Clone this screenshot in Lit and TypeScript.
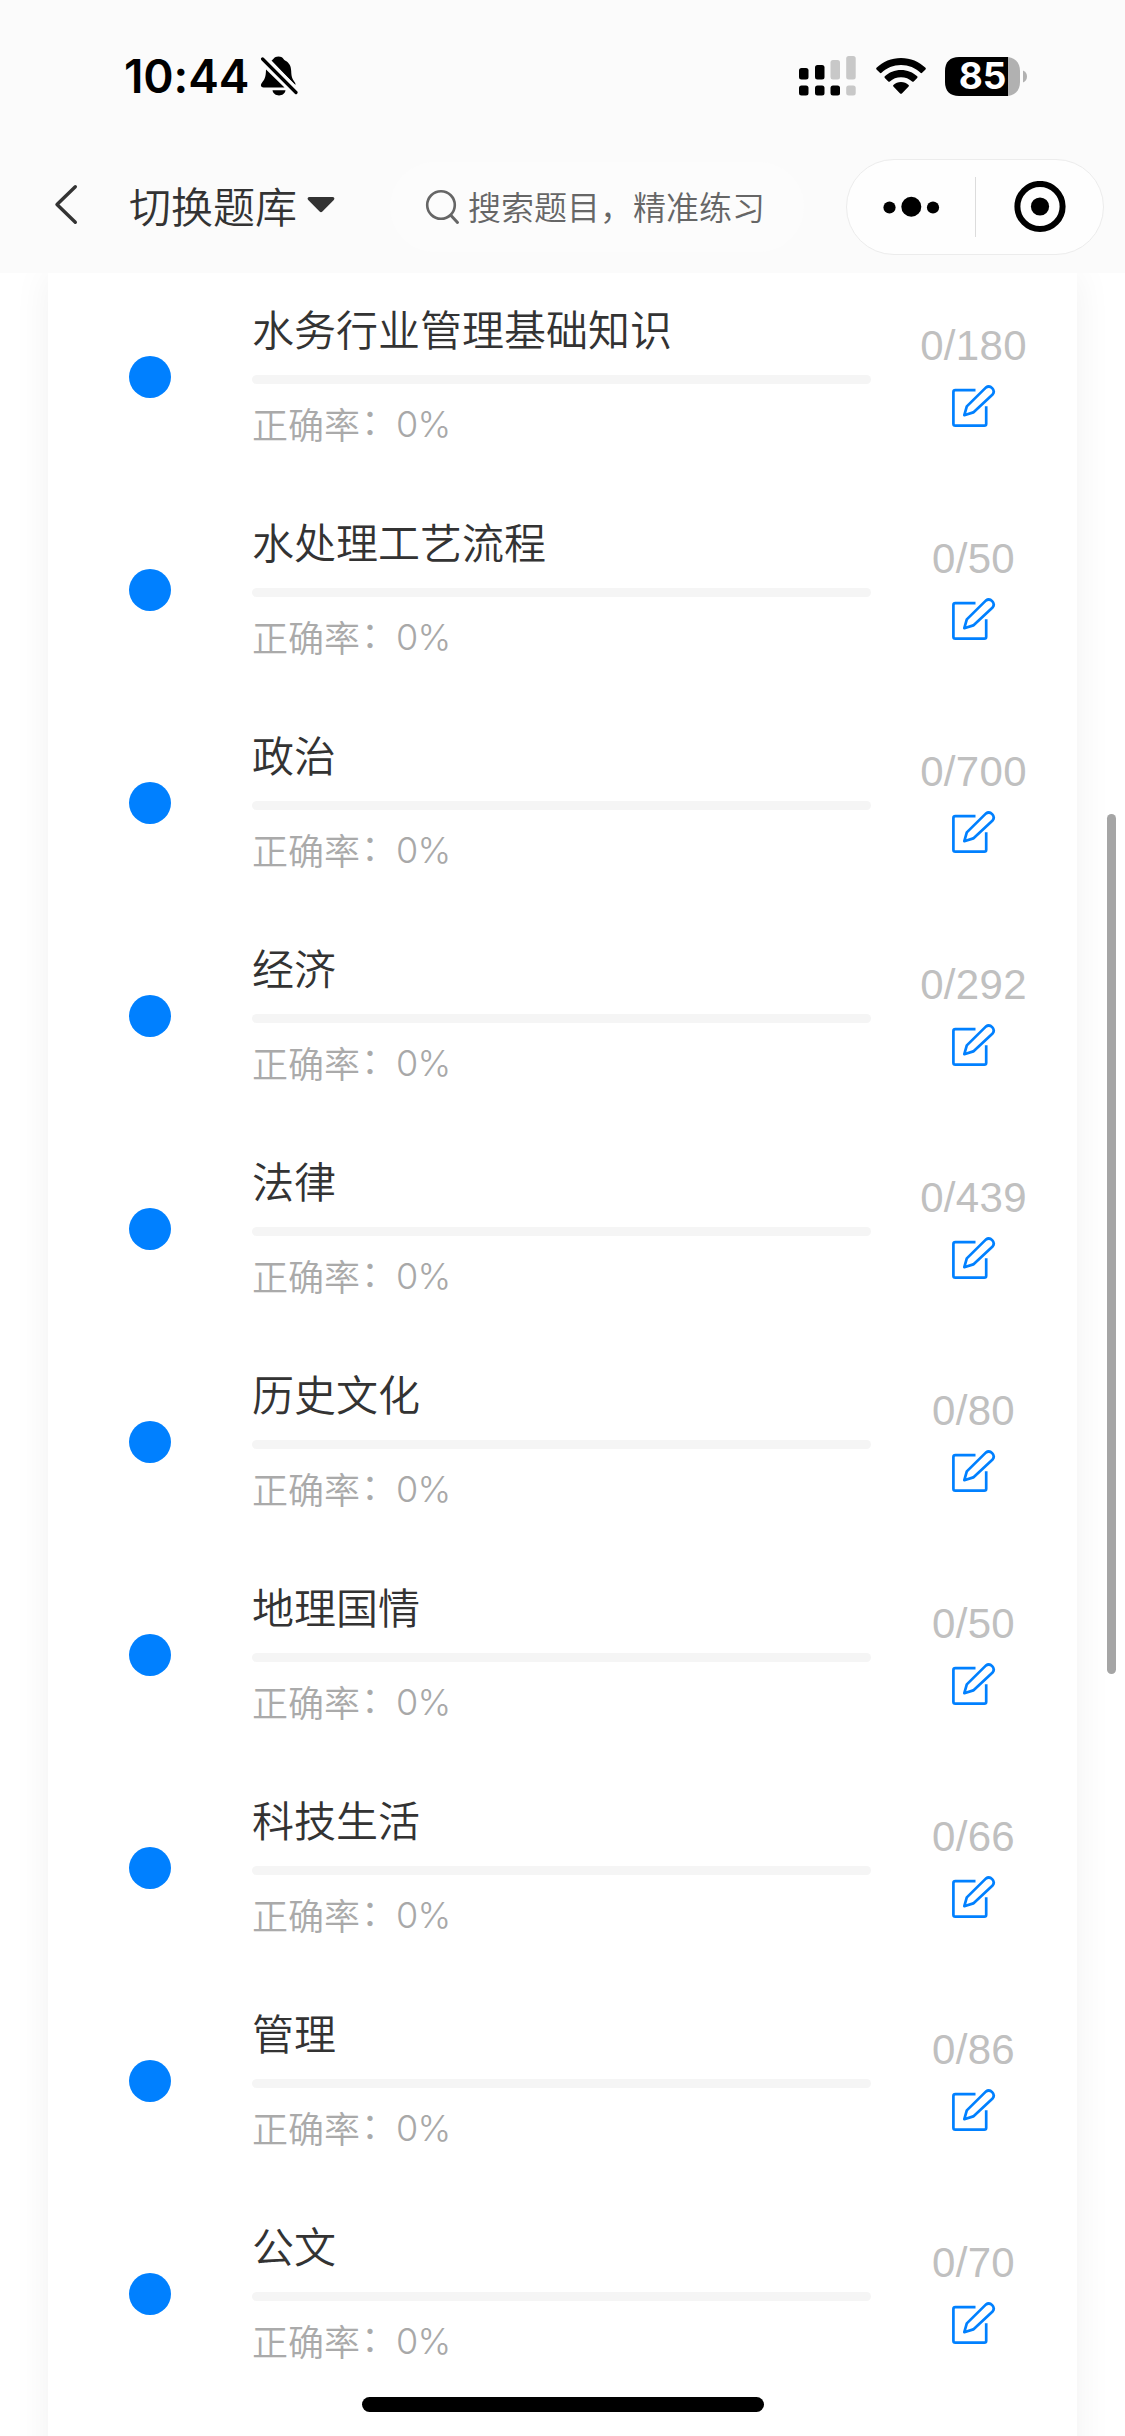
import { LitElement, html, css } from "lit";
import { customElement, property } from "lit/decorators.js";

interface Subject {
  name: string;
  total: number;
}

const SUBJECTS: Subject[] = [
  { name: "水务行业管理基础知识", total: 180 },
  { name: "水处理工艺流程", total: 50 },
  { name: "政治", total: 700 },
  { name: "经济", total: 292 },
  { name: "法律", total: 439 },
  { name: "历史文化", total: 80 },
  { name: "地理国情", total: 50 },
  { name: "科技生活", total: 66 },
  { name: "管理", total: 86 },
  { name: "公文", total: 70 },
];

@customElement("status-bar")
class StatusBar extends LitElement {
  static styles = css`
    :host {
      display: flex;
      justify-content: space-between;
      height: 153px;
      box-sizing: border-box;
      padding: 52px 97px 0 124px;
      font-family: Inter, "Liberation Sans", sans-serif;
      color: #000;
    }
    .left,
    .right {
      display: flex;
      align-items: center;
      height: 48px;
    }
    .time {
      font-size: 46px;
      font-weight: 600;
      line-height: 48px;
      width: 136px;
      letter-spacing: -0.1px;
      white-space: nowrap;
    }
    .wifi {
      margin-left: 19px;
    }
    .battery {
      display: grid;
      margin-left: 19px;
    }
    .battery > * {
      grid-area: 1 / 1;
    }
    .level {
      align-self: center;
      width: 75px;
      color: #fff;
      font-size: 37px;
      font-weight: 700;
      line-height: 37px;
      padding-bottom: 2px;
      text-align: center;
    }
    svg {
      display: block;
    }
  `;

  render() {
    return html`
      <div class="left">
        <span class="time">10:44</span>
        <svg width="38" height="42" viewBox="0 0 38 42">
          <path
            d="M11.500 5.600C13.500 5 13.800 1.600 18.500 1.600S23.300 5 25.500 5.800C29.300 8 31 11 31.200 16c.2 5 .6 7.500 3.500 11.200.8 1 .9 2.200.5 3z"
          />
          <path
            d="M6 14.500L24.500 32.500H3.500c-2.600 0-3.200-2.400-1.900-4.200C4.800 24 5.800 22.500 6 14.500z"
          />
          <path d="M12.500 35.300h13c-.5 3.300-3.200 5.200-6.500 5.200s-6-1.900-6.500-5.200z" />
          <path
            d="M4.800 2.200L38 34.500"
            stroke="#fbfbfb"
            stroke-width="3"
          />
          <path
            d="M2.600 4L36 37.500"
            stroke="#000"
            stroke-width="3.200"
            stroke-linecap="round"
          />
        </svg>
      </div>
      <div class="right">
        <svg width="58" height="40" viewBox="0 0 58 40">
          <g fill="#000">
            <rect x="0" y="12" width="9.500" height="11.500" rx="2.500" />
            <rect x="16" y="9" width="9.500" height="14.500" rx="2.500" />
            <rect x="0" y="29.500" width="9.500" height="10" rx="2.500" />
            <rect x="16" y="29.500" width="9.500" height="10" rx="2.500" />
            <rect x="31.500" y="29.500" width="9.500" height="10" rx="2.500" />
          </g>
          <g fill="#c8c8c8">
            <rect x="31.500" y="4" width="9.500" height="19.500" rx="2.500" />
            <rect x="47.200" y="0" width="9.500" height="23.500" rx="2.500" />
            <rect x="47.200" y="29.500" width="9.500" height="10" rx="2.500" />
          </g>
        </svg>
        <svg class="wifi" width="50" height="38" viewBox="0 0 50 38">
          <path
            d="M25 1C15.500 1 6.800 4.700.5 10.800c-.5.500-.5 1.100 0 1.600l3.400 3.400c.5.500 1.100.5 1.600 0C10.600 11 17.400 8.100 25 8.100s14.400 2.900 19.500 7.700c.5.500 1.100.5 1.600 0l3.400-3.400c.5-.5.5-1.100 0-1.600C43.200 4.700 34.500 1 25 1z"
          />
          <path
            d="M25 13c-6.300 0-12 2.400-16.200 6.300-.5.500-.5 1.100 0 1.600l3.500 3.500c.5.500 1.100.5 1.600 0 2.900-2.600 6.800-4.200 11.100-4.200s8.200 1.600 11.100 4.200c.5.500 1.100.5 1.600 0l3.500-3.500c.5-.5.5-1.100 0-1.600C37 15.400 31.300 13 25 13z"
          />
          <path
            d="M25 25c-2.900 0-5.600 1.100-7.600 2.900-.5.500-.5 1.100 0 1.600l6.700 6.900c.5.500 1.300.5 1.800 0l6.700-6.900c.5-.5.500-1.100 0-1.600-2-1.800-4.700-2.900-7.600-2.900z"
          />
        </svg>
        <div class="battery">
          <svg width="83" height="39" viewBox="0 0 83 39">
            <path d="M63 0h-49C5 0 0 5 0 14v11c0 9 5 14 14 14h49z" />
            <path d="M63 0c7.500 1 12 6 12 14v11c0 8-4.500 13-12 14z" fill="#b1b1b1" />
            <path d="M78 13.500c2.500 1 4 3.300 4 6s-1.500 5-4 6z" fill="#b1b1b1" />
          </svg>
          <span class="level">85</span>
        </div>
      </div>
    `;
  }
}

@customElement("nav-bar")
class NavBar extends LitElement {
  static styles = css`
    :host {
      display: flex;
      align-items: flex-start;
      height: 120px;
      box-sizing: border-box;
      padding-left: 53px;
      font-family: "Noto Sans CJK SC", sans-serif;
      font-weight: 350;
    }
    svg {
      display: block;
      flex: none;
    }
    .back {
      margin-top: 30px;
    }
    .bank {
      display: flex;
      align-items: center;
      margin-left: 50px;
      width: 261px;
      height: 60px;
      margin-top: 22px;
      font-size: 42px;
      line-height: 60px;
      color: #333;
      white-space: nowrap;
    }
    .caret {
      margin-left: 10px;
    }
    .search {
      display: flex;
      align-items: center;
      box-sizing: border-box;
      width: 414px;
      height: 90px;
      margin-top: 9px;
      padding-left: 35px;
      border-radius: 45px;
      background: #fcfcfc;
      color: #666;
      font-size: 33px;
      line-height: 48px;
      white-space: nowrap;
    }
    .search-text {
      margin-left: 8px;
      padding-bottom: 2px;
    }
    .capsule {
      display: flex;
      align-items: center;
      box-sizing: border-box;
      width: 258px;
      height: 96px;
      margin-top: 6px;
      margin-left: 42px;
      border: 1px solid #ececec;
      border-radius: 48px;
      background: #fefefe;
    }
    .more {
      margin-left: 35px;
    }
    .divider {
      width: 1px;
      height: 60px;
      margin-left: 35px;
      background: #dcdcdc;
    }
    .target {
      margin-left: 38px;
    }
  `;

  render() {
    return html`
      <svg class="back" width="26" height="44" viewBox="0 0 26 44">
        <path
          d="M22.300 3.700L4 21.500L22.300 39.300"
          fill="none"
          stroke="#333"
          stroke-width="3.400"
          stroke-linecap="round"
          stroke-linejoin="round"
        />
      </svg>
      <div class="bank">
        <span>切换题库</span>
        <svg class="caret" width="28" height="18" viewBox="0 0 28 18">
          <path
            d="M2.500 1h23c1.800 0 2.500 1.700 1.300 2.900L15.400 15.600c-.8.800-2 .8-2.800 0L1.200 3.900C0 2.700.7 1 2.500 1z"
            fill="#333"
          />
        </svg>
      </div>
      <div class="search">
        <svg width="35" height="36" viewBox="0 0 35 36" fill="none" stroke="#666">
          <circle cx="16" cy="16" r="13.800" stroke-width="2.600" />
          <path d="M26 26.500L32.500 33.500" stroke-width="3" stroke-linecap="round" />
        </svg>
        <span class="search-text">搜索题目，精准练习</span>
      </div>
      <div class="capsule">
        <svg class="more" width="58" height="22" viewBox="0 0 58 22">
          <circle cx="7.500" cy="11.500" r="6.100" />
          <circle cx="29.300" cy="10.700" r="10" />
          <circle cx="51" cy="11.500" r="6.100" />
        </svg>
        <span class="divider"></span>
        <svg class="target" width="52" height="52" viewBox="0 0 52 52">
          <circle cx="26" cy="25.500" r="22.600" fill="none" stroke="#000" stroke-width="6" />
          <circle cx="26" cy="25.500" r="9.100" />
        </svg>
      </div>
    `;
  }
}

@customElement("subject-row")
class SubjectRow extends LitElement {
  @property() name = "";
  @property({ type: Number }) total = 0;

  static styles = css`
    :host {
      display: flex;
      align-items: flex-start;
      height: 213px;
      font-family: "Noto Sans CJK SC", sans-serif;
      font-weight: 350;
    }
    .dot {
      flex: none;
      width: 42px;
      height: 42px;
      margin: 83px 81px 0 81px;
      border-radius: 50%;
      background: #0080ff;
    }
    .body {
      flex: 1;
      padding-top: 25px;
    }
    .name {
      height: 60px;
      font-size: 42px;
      line-height: 60px;
      color: #333;
      white-space: nowrap;
    }
    .track {
      height: 9px;
      margin-top: 17px;
      border-radius: 4.5px;
      background: #f5f5f5;
    }
    .rate {
      display: flex;
      height: 52px;
      margin-top: 13px;
      font-size: 36px;
      line-height: 52px;
      color: #aaa;
      white-space: nowrap;
    }
    .colon {
      width: 36px;
      margin: -4px -1px 0 1px;
    }
    .value {
      font-family: Inter, sans-serif;
      font-size: 36px;
      font-weight: 350;
      letter-spacing: -0.8px;
      line-height: 55px;
      color: #a8a8a8;
    }
    .side {
      display: flex;
      flex: none;
      flex-direction: column;
      align-items: center;
      width: 206px;
      padding-top: 49px;
    }
    .count {
      margin-left: -1px;
      font-family: "Liberation Sans", sans-serif;
      font-weight: 400;
      font-size: 42px;
      line-height: 48px;
      letter-spacing: 0.3px;
      color: #c0c0c0;
    }
    .edit {
      display: block;
      margin-top: 14px;
    }
  `;

  render() {
    return html`
      <span class="dot"></span>
      <div class="body">
        <div class="name">${this.name}</div>
        <div class="track"></div>
        <div class="rate">
          <span>正确率</span><span class="colon">：</span><span class="value">0%</span>
        </div>
      </div>
      <div class="side">
        <span class="count">0/${this.total}</span>
        <svg
          class="edit"
          width="44"
          height="44"
          viewBox="0 0 44 44"
          fill="none"
          stroke="#0080ff"
          stroke-width="2.700"
        >
          <path
            d="M23.500 6.100H3.300Q1.400 6.100 1.400 8V39.800Q1.400 41.700 3.300 41.700H32.300Q34.200 41.700 34.200 39.800V22.300"
          />
          <path
            d="M14.800 22.400L33.800 3.600A4.900 4.900 0 0 1 40.600 10.500L21.300 28.400L12.300 31.200Z"
            stroke-linejoin="round"
          />
        </svg>
      </div>
    `;
  }
}

@customElement("app-root")
class AppRoot extends LitElement {
  static styles = css`
    :host {
      display: block;
      position: relative;
      width: 1125px;
      height: 2436px;
      overflow: hidden;
      background: #fff;
    }
    .header {
      height: 273px;
      background: #fbfbfb;
    }
    .content {
      height: 2163px;
      padding: 0 48px;
      overflow: hidden;
    }
    .card {
      height: 2400px;
      background: #fff;
      box-shadow: 0 0 36px rgba(0, 0, 0, 0.06);
    }
    .scrollbar {
      position: absolute;
      top: 814px;
      right: 9px;
      width: 9px;
      height: 860px;
      border-radius: 4.5px;
      background: #a5a5a5;
    }
    .home {
      position: absolute;
      left: 362px;
      bottom: 24px;
      width: 402px;
      height: 15px;
      border-radius: 7.5px;
      background: #000;
    }
  `;

  render() {
    return html`
      <div class="header">
        <status-bar></status-bar>
        <nav-bar></nav-bar>
      </div>
      <div class="content">
        <div class="card">
          ${SUBJECTS.map(
            (s) => html`<subject-row .name=${s.name} .total=${s.total}></subject-row>`
          )}
        </div>
      </div>
      <div class="scrollbar"></div>
      <div class="home"></div>
    `;
  }
}
